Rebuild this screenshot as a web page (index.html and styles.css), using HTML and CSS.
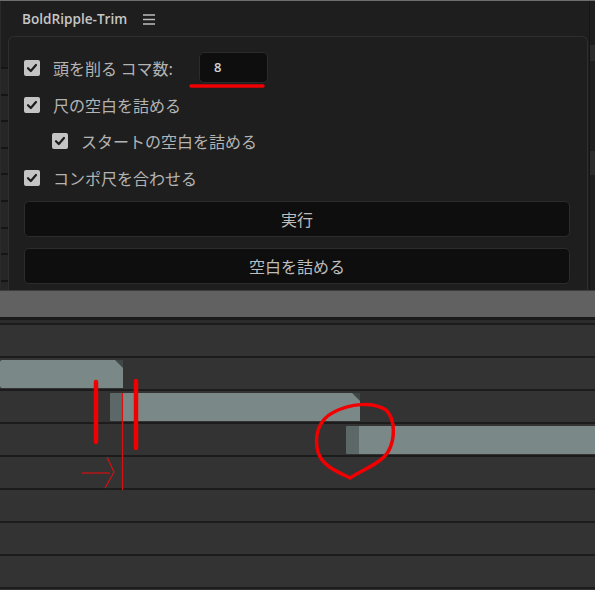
FILE: index.html
```html
<!DOCTYPE html>
<html lang="ja">
<head>
    <meta charset="UTF-8">
    <meta name="viewport" content="width=device-width, initial-scale=1.0">
    <title>BoldRipple-Trim</title>
    <link rel="stylesheet" href="styles.css">
</head>
<body>
<div class="screen">
    <div class="top">
        <div class="edge edge-left">
            <div class="edge-lines"></div>
        </div>
        <div class="panel">
            <div class="panel-head">
                <span class="panel-title">BoldRipple-Trim</span>
                <svg class="menu-icon" width="12" height="11" viewBox="0 0 12 11">
                    <path d="M0 1H12M0 5.5H12M0 10H12" stroke="#bdbdbd" stroke-width="1.4"/>
                </svg>
            </div>
            <div class="group">
                <div class="row">
                    <span class="check"><svg viewBox="0 0 16 16"><path d="M4 8.2L6.8 11L12 5" fill="none" stroke="#1c1c1c" stroke-width="2.2" stroke-linecap="round" stroke-linejoin="round"/></svg></span>
                    <span class="label">頭を削る コマ数:</span>
                    <span class="num-input">8</span>
                </div>
                <div class="row">
                    <span class="check"><svg viewBox="0 0 16 16"><path d="M4 8.2L6.8 11L12 5" fill="none" stroke="#1c1c1c" stroke-width="2.2" stroke-linecap="round" stroke-linejoin="round"/></svg></span>
                    <span class="label">尺の空白を詰める</span>
                </div>
                <div class="row row-sub">
                    <span class="check"><svg viewBox="0 0 16 16"><path d="M4 8.2L6.8 11L12 5" fill="none" stroke="#1c1c1c" stroke-width="2.2" stroke-linecap="round" stroke-linejoin="round"/></svg></span>
                    <span class="label">スタートの空白を詰める</span>
                </div>
                <div class="row">
                    <span class="check"><svg viewBox="0 0 16 16"><path d="M4 8.2L6.8 11L12 5" fill="none" stroke="#1c1c1c" stroke-width="2.2" stroke-linecap="round" stroke-linejoin="round"/></svg></span>
                    <span class="label">コンポ尺を合わせる</span>
                </div>
                <button class="btn btn-run">実行</button>
                <button class="btn">空白を詰める</button>
            </div>
        </div>
        <div class="edge edge-right">
            <div class="edge-patch patch-a"></div>
            <div class="edge-patch patch-b"></div>
        </div>
    </div>

    <div class="timeline">
        <div class="ruler"></div>
        <div class="track-head"></div>
        <div class="tracks">
            <div class="track"></div>
            <div class="track">
                <div class="clip" style="left:0;width:123px"></div>
            </div>
            <div class="track">
                <div class="clip" style="left:110px;width:250px"><span class="clip-start"></span></div>
            </div>
            <div class="track">
                <div class="clip clip-open" style="left:346px;width:249px"><span class="clip-start"></span></div>
            </div>
            <div class="track"></div>
            <div class="track"></div>
            <div class="track"></div>
            <div class="track"></div>
            <div class="track"></div>
        </div>
    </div>

    <svg class="marks" width="595" height="590" viewBox="0 0 595 590">
        <g fill="none" stroke="#f00000" stroke-linecap="round" stroke-linejoin="round">
            <path d="M191 86H263" stroke-width="3.5"/>
            <path d="M96 382V442" stroke-width="4.5"/>
            <path d="M136 381V448" stroke-width="4.5"/>
            <path d="M350 478C338 472 322 466 318 452C314 436 318 420 334 412C350 404 372 401 386 410C396 420 395 440 388 452C380 464 362 470 350 478" stroke-width="3.5"/>
        </g>
        <g fill="none" stroke="#d81010" stroke-width="1.2">
            <path d="M122.5 393V490"/>
            <path d="M82 473H110"/>
            <path d="M107 457L114 472L105 488"/>
        </g>
    </svg>
</div>
</body>
</html>
```

FILE: styles.css
```css
body {
    margin: 0;
    padding: 0;
    background: #1e1e1e;
    font-family: "Noto Sans CJK JP", "Open Sans", sans-serif;
    overflow: hidden;
}

.screen {
    position: relative;
    width: 595px;
    height: 590px;
    overflow: hidden;
}

.top {
    display: flex;
    height: 289px;
    border-top: 1px solid #6e6e6e;
    background: #1e1e1e;
    overflow: hidden;
}

.edge {
    flex: none;
    display: flex;
    flex-direction: column;
}

.edge-left {
    width: 8px;
    border-left: 1px solid #2a2a2a;
    box-sizing: border-box;
}

.edge-lines {
    flex: 1;
    margin-top: 66px;
    background: repeating-linear-gradient(to bottom, #151515 0 2px, #262626 2px 26.6px);
}

.edge-right {
    width: 6px;
    background: #1f1f1f;
    border-left: 1px solid #151515;
    box-sizing: border-box;
}

.edge-patch {
    background: #2c2c2c;
}

.patch-a {
    margin-top: 44px;
    height: 16px;
}

.patch-b {
    margin-top: 90px;
    height: 24px;
}

.panel {
    flex: 1;
    display: flex;
    flex-direction: column;
}

.panel-head {
    display: flex;
    align-items: center;
    height: 35px;
    padding-left: 14px;
}

.panel-title {
    font-family: "Open Sans", sans-serif;
    font-weight: 600;
    font-size: 13.6px;
    color: #c6c6c6;
}

.menu-icon {
    margin-left: 16px;
    margin-top: 1px;
}

.group {
    flex: 1;
    margin-right: 1px;
    padding: 12px 17px 0 15px;
    border: 1px solid #2f2f2f;
    border-bottom: none;
    border-radius: 6px 6px 0 0;
    background: #1e1e1e;
    display: flex;
    flex-direction: column;
}

.row {
    display: flex;
    align-items: center;
    height: 37px;
}

.row-sub {
    height: 36px;
    padding-left: 28px;
}

.check {
    width: 16px;
    height: 16px;
    border-radius: 2px;
    background: #c4c4c4;
    flex: none;
}

.check svg {
    display: block;
    width: 16px;
    height: 16px;
}

.label {
    margin-left: 13px;
    font-size: 16px;
    color: #b3b3b3;
    white-space: nowrap;
}

.num-input {
    margin-left: 26px;
    width: 69px;
    height: 31px;
    box-sizing: border-box;
    padding-left: 14px;
    background: #0e0e0e;
    border: 1px solid #2b2b2b;
    border-radius: 5px;
    font-family: "Open Sans", sans-serif;
    font-weight: 600;
    font-size: 13px;
    line-height: 29px;
    color: #d2d2d2;
}

.btn {
    height: 36px;
    margin-top: 11px;
    background: #0e0e0e;
    border: 1px solid #2c2c2c;
    border-radius: 5px;
    font-family: "Noto Sans CJK JP", sans-serif;
    font-size: 16px;
    color: #bdbdbd;
    padding: 0;
    cursor: pointer;
}

.btn-run {
    margin-top: 5px;
}

.timeline {
    height: 301px;
    background: #333;
}

.ruler {
    height: 26px;
    background: #616161;
    border-top: 1px solid #3c3c3c;
}

.track-head {
    height: 3px;
    background: #1a1a1a;
    border-bottom: 3px solid #2c2c2c;
}

.track {
    position: relative;
    height: 31px;
    border-top: 2px solid #1c1c1c;
    background: #333;
}

.clip {
    position: absolute;
    top: 2px;
    bottom: 1px;
    background: #7a8987;
    border-radius: 2px 0 0 2px;
    display: flex;
}

.clip::after {
    content: "";
    position: absolute;
    top: 0;
    right: 0;
    border-top: 8px solid #3f4746;
    border-left: 8px solid transparent;
}

.clip-open::after {
    display: none;
}

.clip-start {
    width: 13px;
    background: #5c6867;
    border-radius: 2px 0 0 2px;
}

.marks {
    position: absolute;
    top: 0;
    left: 0;
    pointer-events: none;
}
```
